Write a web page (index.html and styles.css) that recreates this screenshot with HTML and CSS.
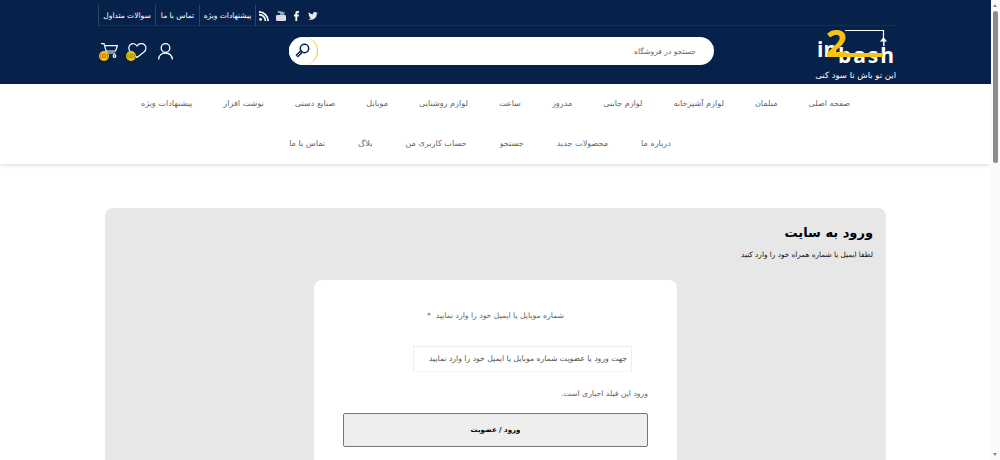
FILE: index.html
```html
<!DOCTYPE html>
<html lang="fa">
<head>
  <meta charset="UTF-8" />
  <title>ورود به سایت</title>
  <link rel="stylesheet" href="styles.css">
</head>
<body>
<div class="window">
  <div class="page">

    <header class="site-header">
      <div class="top-bar">
        <a class="top-link" href="#">سوالات متداول</a>
        <a class="top-link" href="#">تماس با ما</a>
        <a class="top-link" href="#">پیشنهادات ویژه</a>
        <div class="socials">
          <svg width="10" height="10" viewBox="0 0 10 10"><circle cx="1.6" cy="8.4" r="1.4" fill="#fff"/><path d="M0 3.6a6.4 6.4 0 0 1 6.4 6.4M0 .9A9.1 9.1 0 0 1 9.1 10" fill="none" stroke="#fff" stroke-width="1.7"/></svg>
          <svg width="10" height="10" viewBox="0 0 10 10"><path d="M2 0l.8 2L3.600 0M4.300.8h1.300v2.500H4.300zM6.500.8v2.500h1.500V.8" fill="none" stroke="#d8dde6" stroke-width=".8"/><rect x="0" y="4" width="10" height="6" rx="1.200" fill="#d8dde6"/></svg>
          <svg class="icon-f" width="5" height="10" viewBox="0 0 5 10"><path d="M1.400 10V5.400H0V3.600h1.400V2.200C1.400.7 2.300 0 3.500 0H5v1.800H4c-.6 0-.8.3-.8.800v1h1.700l-.2 1.800H3.200V10z" fill="#fff"/></svg>
          <svg width="10" height="8" viewBox="0 0 24 20"><path d="M24 2.400a10 10 0 0 1-2.800.8A5 5 0 0 0 23.300.5a10 10 0 0 1-3.100 1.200 4.900 4.900 0 0 0-8.400 4.500A14 14 0 0 1 1.700.9a4.900 4.900 0 0 0 1.500 6.600A4.900 4.900 0 0 1 1 6.900a4.900 4.900 0 0 0 3.900 4.800 5 5 0 0 1-2.200.1 4.900 4.900 0 0 0 4.600 3.400A9.900 9.900 0 0 1 0 17.300 14 14 0 0 0 21.500 5a10 10 0 0 0 2.500-2.600z" fill="#e6eaf0"/></svg>
        </div>
      </div>

      <div class="main-bar">
        <div class="user-icons">
          <span class="icon-badge">
            <svg width="17" height="15" viewBox="0 0 17 15" fill="none" stroke="#fff" stroke-width="1.200"><path d="M0 .6h3l2.600 9.400h8.700M3.800 2.600h12.600l-1.800 5.400H5.200"/><circle cx="6" cy="13" r="1.300"/><circle cx="13.500" cy="13" r="1.300"/></svg>
            <span class="badge">(0)</span>
          </span>
          <span class="icon-badge">
            <svg width="19" height="15" viewBox="0 0 19 15" fill="none" stroke="#fff" stroke-width="1.200"><path d="M9 3C7.500.6 4.500 0 2.500 1.500.3 3.200.3 6.500 2.200 8.500L9 14.500l7-5.500c2.500-2.300 2.500-5.500.5-7.300-2.200-1.800-5.800-1.400-7.500 1.300z"/></svg>
            <span class="badge">(0)</span>
          </span>
          <svg class="icon-user" width="15" height="17" viewBox="0 0 15 17" fill="none" stroke="#fff" stroke-width="1.300"><circle cx="7.500" cy="5" r="4.300"/><path d="M.7 16.500c0-4 3-6.500 6.800-6.500s6.800 2.500 6.800 6.500"/></svg>
        </div>

        <form class="search">
          <button class="search-btn" type="button">
            <svg width="16" height="16" viewBox="0 0 16 16" fill="none"><circle cx="9.500" cy="5.500" r="4.200" stroke="#07224a" stroke-width="1.500"/><path d="M6.300 8.700L1.700 13.300" stroke="#07224a" stroke-width="3.400"/><path d="M5.500 9.500L2.300 12.700" stroke="#fff" stroke-width="1"/></svg>
          </button>
          <span class="search-text">جستجو در فروشگاه</span>
        </form>

        <div class="logo">
          <svg width="80" height="35" viewBox="0 0 80 35">
            <path d="M29 1.500h38.500V12" fill="none" stroke="#fff" stroke-width="1.200"/>
            <path d="M67.500 8l-3.500 4.500h7z" fill="#fff"/>
            <rect x="67" y="12" width="1.500" height="5" fill="#fff"/>
            <text class="logo-word" x="1" y="28">in</text>
            <text class="logo-word" x="22" y="34" textLength="56">bash</text>
            <rect x="27" y="24" width="40" height="4" fill="#f6c310"/>
            <text class="logo-two" x="9.500" y="28">2</text>
          </svg>
          <span class="tagline">این تو باش تا سود کنی</span>
        </div>
      </div>
    </header>

    <nav class="main-nav">
      <ul class="nav-row">
        <li>صفحه اصلی</li>
        <li>مبلمان</li>
        <li>لوازم آشپزخانه</li>
        <li>لوازم جانبی</li>
        <li>مدروز</li>
        <li>ساعت</li>
        <li>لوازم روشنایی</li>
        <li>موبایل</li>
        <li>صنایع دستی</li>
        <li>نوشت افزار</li>
        <li>پیشنهادات ویژه</li>
      </ul>
      <ul class="nav-row nav-row-second">
        <li>درباره ما</li>
        <li>محصولات جدید</li>
        <li>جستجو</li>
        <li>حساب کاربری من</li>
        <li>بلاگ</li>
        <li>تماس با ما</li>
      </ul>
    </nav>

    <main class="login-panel">
      <h1>ورود به سایت</h1>
      <p class="login-hint">لطفا ایمیل یا شماره همراه خود را وارد کنید</p>
      <div class="login-card">
        <label class="field-label">شماره موبایل یا ایمیل خود را وارد نمایید &nbsp;*</label>
        <div class="field-input">جهت ورود یا عضویت شماره موبایل یا ایمیل خود را وارد نمایید</div>
        <p class="field-error">ورود این فیلد اجباری است.</p>
        <button class="submit-btn" type="button">ورود / عضویت</button>
      </div>
    </main>

  </div>

  <div class="scrollbar">
    <span class="arrow-up"></span>
    <span class="thumb"></span>
    <span class="arrow-down"></span>
  </div>
</div>
</body>
</html>
```

FILE: styles.css
```css
html, body {
  margin: 0;
  height: 460px;
  overflow: hidden;
}
body {
  font-family: "DejaVu Sans", sans-serif;
  font-size: 7.7px;
  color: #666;
  background: #fff;
}
.window {
  display: flex;
  height: 460px;
}
.page {
  flex: 1;
  min-width: 0;
  overflow: hidden;
}

/* header */
.site-header {
  height: 84px;
  background: #07224a;
  padding-left: 98px;
  padding-right: 95px;
  color: #fff;
}
.top-bar {
  display: flex;
  height: 25px;
  border-bottom: 1px solid #12305a;
}
.top-link {
  display: flex;
  align-items: center;
  justify-content: center;
  color: #fff;
  font-size: 7.5px;
  text-decoration: none;
  border-left: 1px solid #2b4469;
  height: 21px;
  margin-top: 5px;
  width: 56px;
}
.top-link:nth-child(2) {
  width: 43px;
}
.top-link:nth-child(3) {
  width: 55px;
}
.socials {
  display: flex;
  align-items: center;
  height: 21px;
  margin-top: 5px;
  padding-left: 3px;
  gap: 7px;
  border-left: 1px solid #2b4469;
}
.icon-f {
  margin: 0 2px 0 1px;
}
.main-bar {
  display: flex;
  align-items: flex-start;
}
.user-icons {
  display: flex;
  align-items: flex-start;
  gap: 10px;
  padding: 17px 0 0 3px;
  width: 188px;
}
.icon-badge {
  position: relative;
  display: block;
  height: 15px;
}
.badge {
  position: absolute;
  left: -2px;
  top: 8px;
  width: 10px;
  height: 10px;
  line-height: 10px;
  border-radius: 50%;
  background: #f6c310;
  color: #5a4a00;
  font-size: 6px;
  text-align: center;
}
.icon-user {
  margin-left: 1px;
}
.search {
  display: flex;
  align-items: center;
  justify-content: space-between;
  width: 425px;
  height: 28px;
  margin-top: 11px;
  background: #fff;
  border-radius: 14px;
}
.search-btn {
  display: flex;
  align-items: center;
  justify-content: center;
  width: 29px;
  height: 28px;
  padding: 0;
  background: #fff;
  border: 0;
  border-right: 1.5px solid #f6c310;
  border-radius: 50%;
}
.search-text {
  padding-right: 18px;
  font-size: 7.5px;
  color: #666;
}
.logo {
  margin-left: auto;
  padding-top: 3px;
  width: 80px;
  text-align: right;
}
.logo svg {
  display: block;
  overflow: visible;
}
.logo-word {
  font-family: "Open Sans", sans-serif;
  font-size: 21px;
  font-weight: 700;
  fill: #fff;
}
.logo-two {
  font-family: "Open Sans", sans-serif;
  font-size: 38px;
  font-weight: 700;
  fill: #f6c310;
}
.tagline {
  display: block;
  margin-top: 6px;
  font-size: 8.5px;
  white-space: nowrap;
  direction: rtl;
}

/* menu */
.main-nav {
  height: 80px;
  background: #fff;
  box-shadow: 0 1px 4px rgba(0, 0, 0, .15);
  position: relative;
  font-size: 8.1px;
}
.nav-row {
  display: flex;
  direction: rtl;
  justify-content: center;
  gap: 31px;
  height: 40px;
  line-height: 38px;
  margin: 0;
  padding: 0;
  list-style: none;
}
.nav-row-second {
  gap: 33px;
  padding-right: 31px;
}

/* login */
.login-panel {
  height: 400px;
  margin: 44px 105px 0;
  padding: 14px 13px 0;
  background: #e7e7e7;
  border-radius: 8px;
  direction: rtl;
}
.login-panel h1 {
  margin: 0;
  font-size: 13px;
  line-height: 22px;
  color: #000;
}
.login-hint {
  margin: 4px 0 0;
  font-size: 7.3px;
  color: #111;
  line-height: 14px;
}
.login-card {
  width: 363px;
  height: 300px;
  margin: 18px auto 0;
  padding: 29px 29px 0;
  box-sizing: border-box;
  background: #fff;
  border-radius: 8px;
}
.field-label {
  display: block;
  margin-right: 84px;
  line-height: 14px;
}
.field-input {
  width: 219px;
  height: 26px;
  margin: 23px 16px 0 0;
  padding-right: 4px;
  box-sizing: border-box;
  border: 1px solid #eee;
  border-bottom-color: #f6f6f6;
  line-height: 24px;
  color: #555;
}
.field-error {
  margin: 15px 0 0;
  line-height: 14px;
}
.submit-btn {
  display: block;
  width: 305px;
  height: 34px;
  margin-top: 12px;
  padding: 0;
  background: #eee;
  border: 1px solid #777;
  border-radius: 2px;
  color: #000;
  font-family: inherit;
  font-size: 7px;
  font-weight: 700;
}

/* scrollbar */
.scrollbar {
  position: relative;
  width: 9px;
  background: #fafafa;
}
.thumb {
  position: absolute;
  left: 2px;
  top: 11px;
  width: 5px;
  height: 152px;
  border-radius: 3px;
  background: #8c8c8c;
}
.arrow-up,
.arrow-down {
  position: absolute;
  left: 2px;
  width: 0;
  height: 0;
  border-left: 2.5px solid transparent;
  border-right: 2.5px solid transparent;
}
.arrow-up {
  top: 4px;
  border-bottom: 3px solid #888;
}
.arrow-down {
  bottom: 4px;
  border-top: 3px solid #888;
}
```
